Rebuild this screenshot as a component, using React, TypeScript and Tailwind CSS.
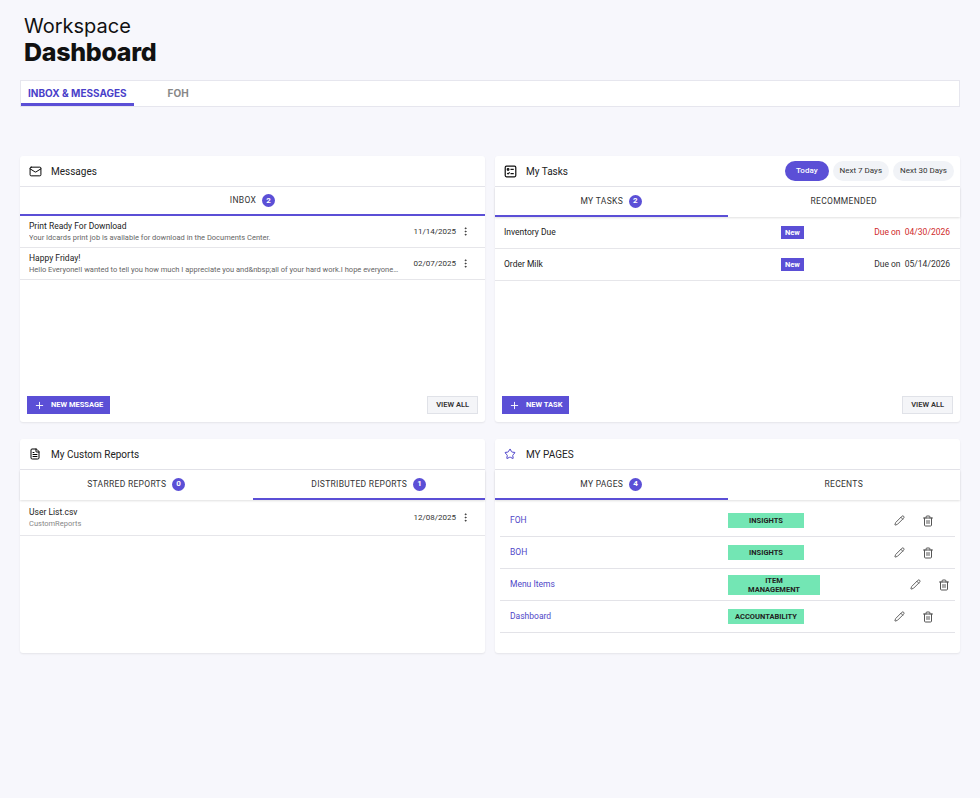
import React from "react";
import { Mail, Plus, FileText, Star, Pencil, Trash2, MoreVertical } from "lucide-react";

const Badge = ({ n }: { n: number }) => (
  <span className="ml-1.5 inline-flex h-[13px] w-[13px] items-center justify-center rounded-full bg-[#5b4fd6] text-[8px] font-bold text-white">{n}</span>
);

const TaskIcon = () => (
  <svg width="13" height="13" viewBox="0 0 16 16" fill="none" stroke="#111" strokeWidth="1.5">
    <rect x="1.5" y="1.5" width="13" height="13" rx="1.5" />
    <circle cx="5" cy="5.5" r="1" />
    <path d="M8 5.5h4M8 10.5h4M4 10l1 1 2-2" />
  </svg>
);

function Card({ children, className = "" }: { children: React.ReactNode; className?: string }) {
  return <div className={`flex flex-col bg-white rounded-[3px] shadow-[0_1px_2px_rgba(0,0,0,0.08)] ${className}`}>{children}</div>;
}

function Header({ icon, title, right }: { icon: React.ReactNode; title: string; right?: React.ReactNode }) {
  return (
    <div className="flex h-[31px] items-center border-b border-[#e4e4ea] pl-[9px] pr-[6px]">
      <span className="flex w-[20px] items-center">{icon}</span>
      <span className="ml-[2px] text-[10px] text-[#222]">{title}</span>
      <div className="ml-auto flex gap-[4px]">{right}</div>
    </div>
  );
}

function Tabs({ tabs, active }: { tabs: { label: string; n?: number }[]; active: number }) {
  return (
    <div className="flex h-[30px] shadow-[0_1px_2px_rgba(0,0,0,0.12)]">
      {tabs.map((t, i) => (
        <div key={i} className={`flex flex-1 items-center justify-center text-[8.5px] tracking-[0.3px] text-[#333] ${i === active ? "border-b-2 border-[#5b4fd6]" : "border-b-2 border-transparent"}`}>
          {t.label}
          {t.n !== undefined && <Badge n={t.n} />}
        </div>
      ))}
    </div>
  );
}

export default function App() {
  return (
    <div className="min-h-[798px] bg-[#f7f7fc] px-[20px] pt-[14px]" style={{ fontFamily: "Roboto, sans-serif" }}>
      <div className="pl-[4px]" style={{ fontFamily: "Inter, sans-serif" }}>
        <div className="text-[20px] leading-[24px] text-[#111]">Workspace</div>
        <div className="text-[25px] font-extrabold leading-[28px] text-[#111] tracking-[-0.3px]">Dashboard</div>
      </div>
      <div className="mt-[14px] flex h-[27px] w-[940px] items-end border border-[#e6e6ee] bg-white" style={{ fontFamily: "Inter, sans-serif" }}>
        <div className="flex h-full items-center border-b-[3px] border-[#5b4fd6] px-[7px] pt-[3px] text-[10px] font-bold text-[#4a3fc9]">INBOX &amp; MESSAGES</div>
        <div className="ml-[34px] flex h-full items-center pb-[1px] text-[10px] font-bold text-[#888]">FOH</div>
      </div>

      <div className="mt-[49px] grid w-[940px] grid-cols-[465px_465px] gap-x-[10px] gap-y-[17px]">
        <Card className="h-[266px]">
          <Header icon={<Mail size={13} strokeWidth={1.8} />} title="Messages" />
          <div className="flex h-[29px] items-center justify-center border-b-2 border-[#5b4fd6] text-[8.5px] tracking-[0.3px] text-[#333]">INBOX<Badge n={2} /></div>
          {[
            ["Print Ready For Download", "Your Idcards print job is available for download in the Documents Center.", "11/14/2025"],
            ["Happy Friday!", "Hello Everyone!I wanted to tell you how much I appreciate you and&nbsp;all of your hard work.I hope everyone…", "02/07/2025"],
          ].map(([t, s, d]) => (
            <div key={t} className="flex h-[32px] items-center border-b border-[#e6e6ea] pl-[9px] pr-[14px]">
              <div className="min-w-0 flex-1">
                <div className="text-[8.5px] text-[#222]">{t}</div>
                <div className="truncate text-[7.5px] text-[#666]">{s}</div>
              </div>
              <span className="ml-1 text-[8px] text-[#333]">{d}</span>
              <MoreVertical size={11} className="ml-[4px] text-[#333]" />
            </div>
          ))}
          <div className="mt-auto flex items-center justify-between px-[7px] pb-[8px]">
            <div className="flex h-[18px] items-center gap-[6px] bg-[#5b4fd6] px-[7px] text-[7.5px] font-bold text-white"><Plus size={11} />NEW MESSAGE</div>
            <div className="flex h-[18px] items-center border border-[#e0e2e8] bg-[#f4f5f8] px-[8px] text-[7.5px] font-semibold text-[#333]">VIEW ALL</div>
          </div>
        </Card>

        <Card className="h-[266px]">
          <Header
            icon={<TaskIcon />}
            title="My Tasks"
            right={
              <>
                <span className="rounded-full bg-[#5b4fd6] px-[11px] py-[4px] text-[8px] font-medium text-white">Today</span>
                <span className="rounded-full bg-[#f1f3f7] px-[7px] py-[4px] text-[8px] text-[#333]">Next 7 Days</span>
                <span className="rounded-full bg-[#f1f3f7] px-[7px] py-[4px] text-[8px] text-[#333]">Next 30 Days</span>
              </>
            }
          />
          <Tabs tabs={[{ label: "MY TASKS", n: 2 }, { label: "RECOMMENDED" }]} active={0} />
          {[
            ["Inventory Due", "04/30/2026", true],
            ["Order Milk", "05/14/2026", false],
          ].map(([t, d, red]) => (
            <div key={t as string} className="flex h-[32px] items-center border-b border-[#e6e6ea] pl-[9px] pr-[10px] text-[8.5px]">
              <span className="w-[277px] text-[#222]">{t}</span>
              <span className="bg-[#5b4fd6] px-[4px] py-[1px] text-[7.5px] font-bold text-white">New</span>
              <span className={`ml-auto ${red ? "text-[#d02b2b]" : "text-[#333]"}`}>Due on&nbsp; {d}</span>
            </div>
          ))}
          <div className="mt-auto flex items-center justify-between px-[7px] pb-[8px]">
            <div className="flex h-[18px] items-center gap-[6px] bg-[#5b4fd6] px-[7px] text-[7.5px] font-bold text-white"><Plus size={11} />NEW TASK</div>
            <div className="flex h-[18px] items-center border border-[#e0e2e8] bg-[#f4f5f8] px-[8px] text-[7.5px] font-semibold text-[#333]">VIEW ALL</div>
          </div>
        </Card>

        <Card className="h-[214px]">
          <Header icon={<FileText size={12} strokeWidth={2} />} title="My Custom Reports" />
          <Tabs tabs={[{ label: "STARRED REPORTS", n: 0 }, { label: "DISTRIBUTED REPORTS", n: 1 }]} active={1} />
          <div className="flex h-[36px] items-center border-b border-[#e6e6ea] pl-[9px] pr-[14px]">
            <div className="flex-1">
              <div className="text-[8.5px] text-[#222]">User List.csv</div>
              <div className="text-[7.5px] text-[#888]">CustomReports</div>
            </div>
            <span className="text-[8px] text-[#333]">12/08/2025</span>
            <MoreVertical size={11} className="ml-[4px] text-[#333]" />
          </div>
        </Card>

        <Card className="h-[214px]">
          <Header icon={<Star size={12} className="text-[#4a3fc9]" />} title="MY PAGES" />
          <Tabs tabs={[{ label: "MY PAGES", n: 4 }, { label: "RECENTS" }]} active={0} />
          <div className="mt-[5px] px-[5px]">
            {[
              ["FOH", "INSIGHTS"],
              ["BOH", "INSIGHTS"],
              ["Menu Items", "ITEM MANAGEMENT"],
              ["Dashboard", "ACCOUNTABILITY"],
            ].map(([n, tag]) => (
              <div key={n} className="flex h-[32px] items-center border-b border-[#e3e3e8] pl-[10px] text-[8.5px]">
                <span className="w-[218px] text-[#5047c8]">{n}</span>
                <span className={`flex min-h-[15px] w-[76px] items-center justify-center bg-[#73e6b4] text-center text-[7.5px] font-bold leading-[9px] text-[#222] ${n === "Menu Items" ? "w-[60px] px-[8px] py-[1px] box-content" : ""} whitespace-pre-line`}>
                  {tag === "ITEM MANAGEMENT" ? "ITEM\nMANAGEMENT" : tag}
                </span>
                <Pencil size={11} className="ml-[90px] text-[#555]" />
                <Trash2 size={12} className="ml-[17px] text-[#555]" />
              </div>
            ))}
          </div>
        </Card>
      </div>
    </div>
  );
}
